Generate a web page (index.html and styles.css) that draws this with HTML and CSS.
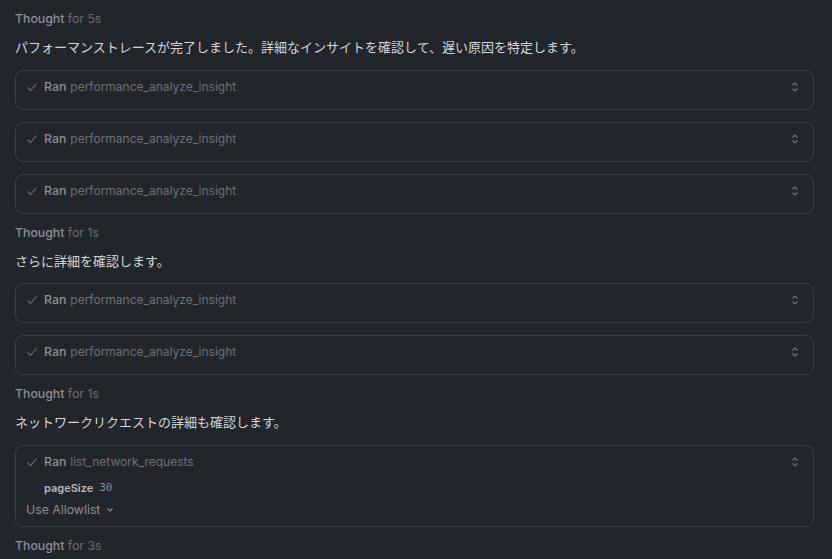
FILE: index.html
```html
<!DOCTYPE html>
<html lang="ja">
<head>
<meta charset="utf-8">
<link rel="stylesheet" href="styles.css">
</head>
<body>
<div class="chat">
  <div class="thought">Thought <span class="dim">for 5s</span></div>
  <p class="msg">パフォーマンストレースが完了しました。詳細なインサイトを確認して、遅い原因を特定します。</p>
  <div class="cards">
    <div class="card"><div class="head"><svg class="check" viewBox="0 0 12 12"><path d="M1.5 6.5 L4.5 9.5 L10.5 2.5"/></svg><span class="ran">Ran</span><span class="tool">performance_analyze_insight</span><svg class="updown" viewBox="0 0 8 12"><path d="M1.5 4.5 L4 2 L6.5 4.5 M1.5 7.5 L4 10 L6.5 7.5"/></svg></div></div>
    <div class="card"><div class="head"><svg class="check" viewBox="0 0 12 12"><path d="M1.5 6.5 L4.5 9.5 L10.5 2.5"/></svg><span class="ran">Ran</span><span class="tool">performance_analyze_insight</span><svg class="updown" viewBox="0 0 8 12"><path d="M1.5 4.5 L4 2 L6.5 4.5 M1.5 7.5 L4 10 L6.5 7.5"/></svg></div></div>
    <div class="card"><div class="head"><svg class="check" viewBox="0 0 12 12"><path d="M1.5 6.5 L4.5 9.5 L10.5 2.5"/></svg><span class="ran">Ran</span><span class="tool">performance_analyze_insight</span><svg class="updown" viewBox="0 0 8 12"><path d="M1.5 4.5 L4 2 L6.5 4.5 M1.5 7.5 L4 10 L6.5 7.5"/></svg></div></div>
  </div>
  <div class="thought">Thought <span class="dim">for 1s</span></div>
  <p class="msg">さらに詳細を確認します。</p>
  <div class="cards">
    <div class="card"><div class="head"><svg class="check" viewBox="0 0 12 12"><path d="M1.5 6.5 L4.5 9.5 L10.5 2.5"/></svg><span class="ran">Ran</span><span class="tool">performance_analyze_insight</span><svg class="updown" viewBox="0 0 8 12"><path d="M1.5 4.5 L4 2 L6.5 4.5 M1.5 7.5 L4 10 L6.5 7.5"/></svg></div></div>
    <div class="card"><div class="head"><svg class="check" viewBox="0 0 12 12"><path d="M1.5 6.5 L4.5 9.5 L10.5 2.5"/></svg><span class="ran">Ran</span><span class="tool">performance_analyze_insight</span><svg class="updown" viewBox="0 0 8 12"><path d="M1.5 4.5 L4 2 L6.5 4.5 M1.5 7.5 L4 10 L6.5 7.5"/></svg></div></div>
  </div>
  <div class="thought">Thought <span class="dim">for 1s</span></div>
  <p class="msg">ネットワークリクエストの詳細も確認します。</p>
  <div class="cards">
    <div class="card open">
      <div class="head"><svg class="check" viewBox="0 0 12 12"><path d="M1.5 6.5 L4.5 9.5 L10.5 2.5"/></svg><span class="ran">Ran</span><span class="tool">list_network_requests</span><svg class="updown" viewBox="0 0 8 12"><path d="M1.5 4.5 L4 2 L6.5 4.5 M1.5 7.5 L4 10 L6.5 7.5"/></svg></div>
      <div class="param"><span class="pkey">pageSize</span><span class="pval">30</span></div>
      <div class="allow">Use Allowlist <svg class="down" viewBox="0 0 10 10"><path d="M2.5 3.5 L5 6 L7.5 3.5"/></svg></div>
    </div>
  </div>
  <div class="thought">Thought <span class="dim">for 3s</span></div>
</div>
</body>
</html>
```
FILE: styles.css
```css
html, body {
  margin: 0;
  padding: 0;
  background: #22252c;
}
body {
  font-family: Inter, "Noto Sans CJK JP", sans-serif;
  font-size: 12px;
  color: #d4d6da;
  overflow: hidden;
  height: 559px;
}
.chat {
  display: flex;
  flex-direction: column;
  padding: 10px 18px 0 15px;
}
.thought {
  line-height: 18px;
  color: #8c8f95;
  font-weight: 500;
  font-size: 12.3px;
}
.thought .dim {
  color: #6a6d73;
  font-weight: 400;
}
.msg {
  margin: 10px 0 0;
  line-height: 18px;
  font-size: 13px;
  color: #d4d6da;
}
.cards {
  display: flex;
  flex-direction: column;
  gap: 12px;
  margin: 13.6px 0 10px;
}
.card {
  border: 1px solid #3a3d45;
  border-radius: 8px;
  padding: 7px 0 13px 10px;
}
.card.open {
  padding-bottom: 7px;
}
.head {
  display: flex;
  align-items: center;
  height: 18px;
  line-height: 18px;
  padding-right: 14px;
}
.check {
  width: 12px;
  height: 12px;
  fill: none;
  stroke: #6e7178;
  stroke-width: 1.1;
  margin-right: 6px;
}
.ran {
  color: #8c8f95;
  font-weight: 500;
  font-size: 12.3px;
  margin-right: 4px;
}
.tool {
  color: #6d7077;
  font-size: 12px;
  flex: 1;
}
.updown {
  width: 8px;
  height: 12px;
  fill: none;
  stroke: #70737a;
  stroke-width: 1.1;
}
.param {
  margin: 8px 0 0 18px;
  line-height: 18px;
  display: flex;
  gap: 6px;
  font-size: 11px;
}
.pkey {
  color: #b4b7bd;
  font-weight: 600;
}
.pval {
  font-family: "DejaVu Sans Mono", monospace;
  color: #8c8f95;
  font-size: 11px;
}
.allow {
  margin-top: 4px;
  line-height: 18px;
  color: #8c8f95;
  font-size: 12.3px;
  display: flex;
  align-items: center;
  gap: 5px;
}
.down {
  width: 10px;
  height: 10px;
  fill: none;
  stroke: #8c8f95;
  stroke-width: 1.2;
}
```
